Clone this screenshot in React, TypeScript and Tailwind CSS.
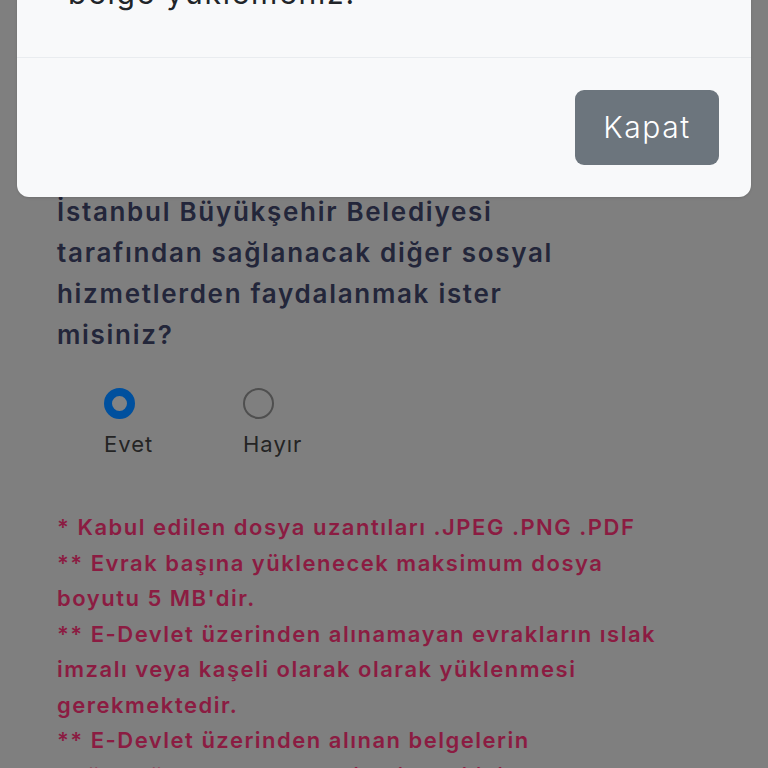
import React from 'react';

const font = { fontFamily: 'Inter, "Noto Sans", sans-serif' };

function Radio({ checked, label }: { checked: boolean; label: string }) {
  return (
    <label className="w-[139px] flex flex-col items-start gap-[10px]">
      {checked ? (
        <span className="block w-[31px] h-[31px] rounded-full border-[8px] border-[#00509e] bg-[#838383]" />
      ) : (
        <span className="block w-[31px] h-[31px] rounded-full border-[2px] border-[#4f4f4f]" />
      )}
      <span className="text-[22px] leading-[30px] tracking-[1px] text-[#242424]">{label}</span>
    </label>
  );
}

const notes = [
  ['* Kabul edilen dosya uzantıları .JPEG .PNG .PDF'],
  ['** Evrak başına yüklenecek maksimum dosya', "boyutu 5 MB'dir."],
  ['** E-Devlet üzerinden alınamayan evrakların ıslak', 'imzalı veya kaşeli olarak olarak yüklenmesi', 'gerekmektedir.'],
  ['** E-Devlet üzerinden alınan belgelerin', 'doğruluğunun kontrol edilebilmesi için barkodlu'],
];

export default function App() {
  return (
    <div className="relative h-[768px] overflow-hidden bg-[#7f7f7f]" style={font}>
      {/* page behind the dimmed backdrop */}
      <div className="pt-[191px] pl-[57px] pr-[60px]">
        <p className="text-[26px] leading-[41px] font-semibold tracking-[1.7px] text-[#23263a]">
          İstanbul Büyükşehir Belediyesi
          <br />
          tarafından sağlanacak diğer sosyal
          <br />
          hizmetlerden faydalanmak ister
          <br />
          misiniz?
        </p>

        <div className="flex pl-[47px] mt-[33px]">
          <Radio checked label="Evet" />
          <Radio checked={false} label="Hayır" />
        </div>

        <div className="mt-[51px] whitespace-nowrap text-[22px] leading-[35.5px] font-semibold tracking-[1.5px] text-[#8b1c42]">
          {notes.map((lines) => (
            <p key={lines[0]}>
              {lines.map((l, i) => (
                <React.Fragment key={l}>
                  {i > 0 && <br />}
                  {l}
                </React.Fragment>
              ))}
            </p>
          ))}
        </div>
      </div>

      {/* modal */}
      <div className="absolute left-[17px] right-[17px] top-[-80px] rounded-[12px] bg-[#f8f9fa] shadow-sm">
        <div className="pl-[51px] pr-[40px] pt-[51px] pb-[41px] border-b border-[#e9ecef]">
          <p className="text-[30px] leading-[45px] tracking-[1.8px] text-[#212529]">belge yüklemeniz.</p>
        </div>
        <div className="flex justify-end px-[32px] pt-[32px] pb-[32px]">
          <button
            type="button"
            className="w-[144px] h-[75px] rounded-[9px] bg-[#6c757d] text-[30px] font-light tracking-[1.6px] text-white"
          >
            Kapat
          </button>
        </div>
      </div>
    </div>
  );
}
